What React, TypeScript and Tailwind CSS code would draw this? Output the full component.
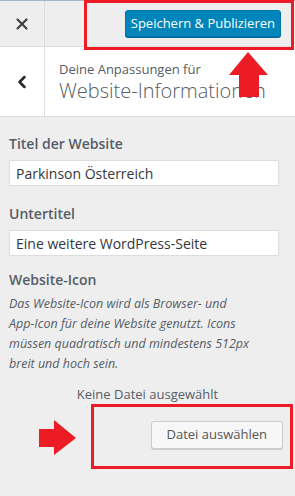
import { X, ChevronLeft } from "lucide-react";

function UpArrow() {
  return (
    <svg width="40" height="46" viewBox="0 0 40 46" className="absolute left-[229px] top-[52px]">
      <polygon points="19,0 39,23 30,23 30,45 10,45 10,23 0,23" fill="#ed1c24" />
    </svg>
  );
}

function RightArrow() {
  return (
    <svg width="38" height="36" viewBox="0 0 38 36" className="absolute left-[39px] top-[420px]">
      <polygon points="0,9 15,9 15,0 37,18 15,35 15,27 0,27" fill="#ed1c24" />
    </svg>
  );
}

export default function App() {
  return (
    <div
      className="relative w-[295px] h-[496px] bg-[#eeeeee] text-[#555d66] overflow-hidden"
      style={{ fontFamily: '"Open Sans", sans-serif' }}
    >
      {/* top bar */}
      <div className="flex h-[47px] border-t border-[#a9b7c4] border-b border-b-[#dddddd] bg-[#eeeeee]">
        <div className="w-[45px] flex items-center justify-center border-r border-[#dddddd]">
          <X size={18} strokeWidth={3} className="text-[#444]" />
        </div>
        <div className="flex-1 flex items-center justify-end pr-[14px]">
          <button className="h-[27px] px-[5px] rounded-[3px] bg-[#0085ba] border border-[#0073aa] text-white text-[13px] leading-none shadow-[0_1px_0_#006799]">
            Speichern &amp; Publizieren
          </button>
        </div>
      </div>

      {/* section title */}
      <div className="flex h-[70px] bg-white border-b border-[#dddddd]">
        <div className="w-[45px] flex items-center justify-center border-r border-[#dddddd]">
          <ChevronLeft size={20} strokeWidth={3} className="text-[#23282d]" />
        </div>
        <div className="flex-1 pl-[14px] pt-[13px]">
          <div className="text-[13px] leading-[18px] text-[#555d66]">Deine Anpassungen für</div>
          <div className="text-[20px] leading-[26px] font-light text-[#555d66]">Website-Informationen</div>
        </div>
      </div>

      {/* fields */}
      <div className="px-[9px] pt-[17px]">
        <div className="text-[14px] font-semibold leading-[20px] text-[#555d66]">Titel der Website</div>
        <div className="mt-[6px] w-[270px] h-[26px] bg-white border border-[#dddddd] px-[6px] flex items-center text-[14px] text-[#32373c]">
          Parkinson Österreich
        </div>

        <div className="mt-[18px] text-[14px] font-semibold leading-[20px] text-[#555d66]">Untertitel</div>
        <div className="mt-[6px] w-[270px] h-[26px] bg-white border border-[#dddddd] px-[6px] flex items-center text-[14px] text-[#32373c]">
          Eine weitere WordPress-Seite
        </div>

        <div className="mt-[14px] text-[14px] font-semibold leading-[20px] text-[#555d66]">Website-Icon</div>
        <p className="mt-[4px] w-[256px] text-[12.5px] italic leading-[20px] text-[#555d66]">
          Das Website-Icon wird als Browser- und <span className="whitespace-nowrap">App-Icon</span> für deine Website genutzt. Icons müssen quadratisch und mindestens 512px breit und hoch sein.
        </p>

        <div className="mt-[11px] text-center text-[13px] leading-[18px] text-[#555d66]">Keine Datei ausgewählt</div>
        <div className="mt-[18px] flex justify-end pr-[3px]">
          <button className="h-[28px] px-[15px] rounded-[3px] bg-[#f7f7f7] border border-[#cccccc] text-[13px] text-[#555] shadow-[0_1px_0_#cccccc]">
            Datei auswählen
          </button>
        </div>
      </div>

      {/* annotations */}
      <div className="absolute left-[84px] top-0 w-[210px] h-[50px] border-[3px] border-[#ed1c24]" />
      <UpArrow />
      <div className="absolute left-[91px] top-[404px] w-[202px] h-[65px] border-[3px] border-[#ed1c24]" />
      <RightArrow />
    </div>
  );
}
